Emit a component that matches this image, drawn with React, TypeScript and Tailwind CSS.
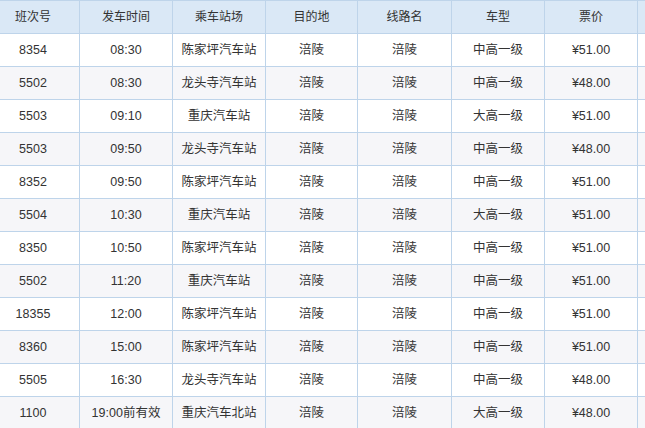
const rows = [
  ["8354", "08:30", "陈家坪汽车站", "涪陵", "涪陵", "中高一级", "¥51.00"],
  ["5502", "08:30", "龙头寺汽车站", "涪陵", "涪陵", "中高一级", "¥48.00"],
  ["5503", "09:10", "重庆汽车站", "涪陵", "涪陵", "大高一级", "¥51.00"],
  ["5503", "09:50", "龙头寺汽车站", "涪陵", "涪陵", "中高一级", "¥48.00"],
  ["8352", "09:50", "陈家坪汽车站", "涪陵", "涪陵", "中高一级", "¥51.00"],
  ["5504", "10:30", "重庆汽车站", "涪陵", "涪陵", "大高一级", "¥51.00"],
  ["8350", "10:50", "陈家坪汽车站", "涪陵", "涪陵", "中高一级", "¥51.00"],
  ["5502", "11:20", "重庆汽车站", "涪陵", "涪陵", "中高一级", "¥51.00"],
  ["18355", "12:00", "陈家坪汽车站", "涪陵", "涪陵", "中高一级", "¥51.00"],
  ["8360", "15:00", "陈家坪汽车站", "涪陵", "涪陵", "中高一级", "¥51.00"],
  ["5505", "16:30", "龙头寺汽车站", "涪陵", "涪陵", "中高一级", "¥48.00"],
  ["1100", "19:00前有效", "重庆汽车北站", "涪陵", "涪陵", "大高一级", "¥48.00"],
];

const headers = ["班次号", "发车时间", "乘车站场", "目的地", "线路名", "车型", "票价", ""];
const widths = ["w-[93px]", "w-[93px]", "w-[93px]", "w-[92px]", "w-[94px]", "w-[93px]", "w-[93px]", "w-[93px]"];

export default function App() {
  return (
    <div
      className="h-[428px] w-[645px] overflow-hidden bg-white text-[12.5px] text-[#333]"
      style={{ fontFamily: 'Arial, "Liberation Sans", "Noto Sans CJK SC", sans-serif' }}
    >
      <table className="ml-[-14px] w-[744px] table-fixed border-collapse">
        <colgroup>
          {widths.map((w, i) => (
            <col key={i} className={w} />
          ))}
        </colgroup>
        <thead>
          <tr className="h-[33px] bg-[#dae8f6]">
            {headers.map((h, i) => (
              <th key={i} className="border border-[#bed4ea] p-0 text-center text-[12px] font-normal">
                {h}
              </th>
            ))}
          </tr>
        </thead>
        <tbody>
          {rows.map((r, ri) => (
            <tr key={ri} className={`h-[33px] ${ri % 2 === 1 ? "bg-[#f6f6f9]" : "bg-white"}`}>
              {r.map((c, ci) => (
                <td key={ci} className="border border-[#bed4ea] p-0 text-center">
                  {c}
                </td>
              ))}
              <td className="border border-[#bed4ea] p-0" />
            </tr>
          ))}
        </tbody>
      </table>
    </div>
  );
}
